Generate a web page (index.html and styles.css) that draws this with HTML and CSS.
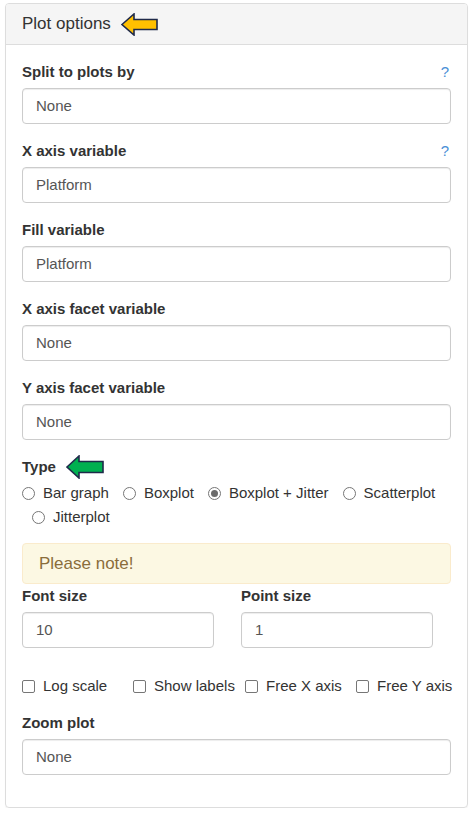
FILE: index.html
```html
<!DOCTYPE html>
<html>
<head>
<meta charset="utf-8">
<link rel="stylesheet" href="styles.css">
</head>
<body>
<div class="panel">
  <div class="panel-heading">
    <span class="title">Plot options</span>
    <svg class="arrow" width="38" height="23" viewBox="0 0 38 23"><path d="M1 11.5 L13 1 L13 6.5 L36 6.5 L36 16.5 L13 16.5 L13 22 Z" fill="#ffc000" stroke="#1f2a4a" stroke-width="1.6" stroke-linejoin="miter"/></svg>
  </div>
  <div class="panel-body">
    <div class="form-group">
      <div class="label-row"><label>Split to plots by</label><span class="help">?</span></div>
      <div class="select">None</div>
    </div>
    <div class="form-group">
      <div class="label-row"><label>X axis variable</label><span class="help">?</span></div>
      <div class="select">Platform</div>
    </div>
    <div class="form-group">
      <div class="label-row"><label>Fill variable</label></div>
      <div class="select">Platform</div>
    </div>
    <div class="form-group">
      <div class="label-row"><label>X axis facet variable</label></div>
      <div class="select">None</div>
    </div>
    <div class="form-group">
      <div class="label-row"><label>Y axis facet variable</label></div>
      <div class="select">None</div>
    </div>
    <div class="type-group">
      <div class="label-row type-row"><label>Type</label>
        <svg class="arrow" width="39" height="24" viewBox="0 0 39 24"><path d="M1 12 L13 1 L13 6.5 L37 6.5 L37 17.5 L13 17.5 L13 23 Z" fill="#00b050" stroke="#1f2a4a" stroke-width="1.6" stroke-linejoin="miter"/></svg>
      </div>
      <div class="radios">
        <span class="radio-item"><span class="radio"></span>Bar graph</span>
        <span class="radio-item"><span class="radio"></span>Boxplot</span>
        <span class="radio-item"><span class="radio checked"></span>Boxplot + Jitter</span>
        <span class="radio-item"><span class="radio"></span>Scatterplot</span>
        <span class="radio-item"><span class="radio"></span>Jitterplot</span>
      </div>
    </div>
    <div class="alert">Please note!</div>
    <div class="two-cols">
      <div class="col">
        <div class="label-row"><label>Font size</label></div>
        <div class="select">10</div>
      </div>
      <div class="col">
        <div class="label-row"><label>Point size</label></div>
        <div class="select">1</div>
      </div>
    </div>
    <div class="checks">
      <span class="check-item"><span class="checkbox"></span>Log scale</span>
      <span class="check-item"><span class="checkbox"></span>Show labels</span>
      <span class="check-item"><span class="checkbox"></span>Free X axis</span>
      <span class="check-item"><span class="checkbox"></span>Free Y axis</span>
    </div>
    <div class="form-group last">
      <div class="label-row"><label>Zoom plot</label></div>
      <div class="select">None</div>
    </div>
  </div>
</div>
</body>
</html>
```
FILE: styles.css
```css
* { box-sizing: border-box; }
html, body { margin: 0; padding: 0; background: #fff; }
body {
  font-family: "Liberation Sans", Arial, sans-serif;
  font-size: 15px;
  line-height: 20px;
  color: #333;
  padding: 3px 0 0 5px;
}
.panel {
  width: 463px;
  height: 805px;
  border: 1px solid #ddd;
  border-radius: 4px;
  box-shadow: 0 1px 1px rgba(0,0,0,0.05);
}
.panel-heading {
  background: #f5f5f5;
  border-bottom: 1px solid #ddd;
  border-radius: 3px 3px 0 0;
  height: 41px;
  padding: 0 16px;
  display: flex;
  align-items: center;
  gap: 10px;
}
.panel-heading .title {
  font-size: 17px;
  color: #333;
}
.arrow { display: block; }
.panel-body {
  padding: 17px 16px 0 16px;
}
.form-group { margin-bottom: 17px; }
.label-row {
  display: flex;
  align-items: center;
  height: 20px;
  margin-bottom: 6px;
}
.label-row label { font-weight: bold; }
.help {
  margin-left: auto;
  margin-right: 2px;
  color: #4a8fd6;
  font-size: 15px;
}
.select {
  height: 36px;
  border: 1px solid #ccc;
  border-radius: 4px;
  padding: 0 13px;
  display: flex;
  align-items: center;
  color: #555;
  box-shadow: inset 0 1px 1px rgba(0,0,0,0.075);
}
.type-row { gap: 10px; margin-bottom: 6px; }
.radios {
  display: flex;
  flex-wrap: wrap;
  row-gap: 4px;
  margin-bottom: 16px;
}
.radio-item {
  display: inline-flex;
  align-items: center;
  height: 20px;
  margin-left: 14px;
}
.radio-item:first-child { margin-left: 0; }
.radio {
  width: 13px;
  height: 13px;
  border: 1px solid #767676;
  border-radius: 50%;
  margin-right: 8px;
  display: inline-flex;
  align-items: center;
  justify-content: center;
}
.radio.checked::after {
  content: "";
  width: 7px;
  height: 7px;
  border-radius: 50%;
  background: #6b6b6b;
}
.radio-item:last-child { margin-left: 10px; }
.alert {
  height: 41px;
  background: #fcf8e3;
  border: 1px solid #faebcc;
  border-radius: 4px;
  color: #8a6d3b;
  font-size: 17px;
  padding: 0 16px;
  display: flex;
  align-items: center;
  margin-bottom: 2px;
}
.two-cols {
  display: grid;
  grid-template-columns: 192px 192px;
  column-gap: 27px;
  margin-bottom: 28px;
}
.checks {
  display: grid;
  grid-template-columns: 111px 112px 111px 111px;
  height: 20px;
  margin-bottom: 17px;
  width: 445px;
}
.check-item {
  display: inline-flex;
  align-items: center;
  white-space: nowrap;
}
.checkbox {
  width: 13px;
  height: 13px;
  border: 1px solid #767676;
  border-radius: 2px;
  margin-right: 8px;
}
```
